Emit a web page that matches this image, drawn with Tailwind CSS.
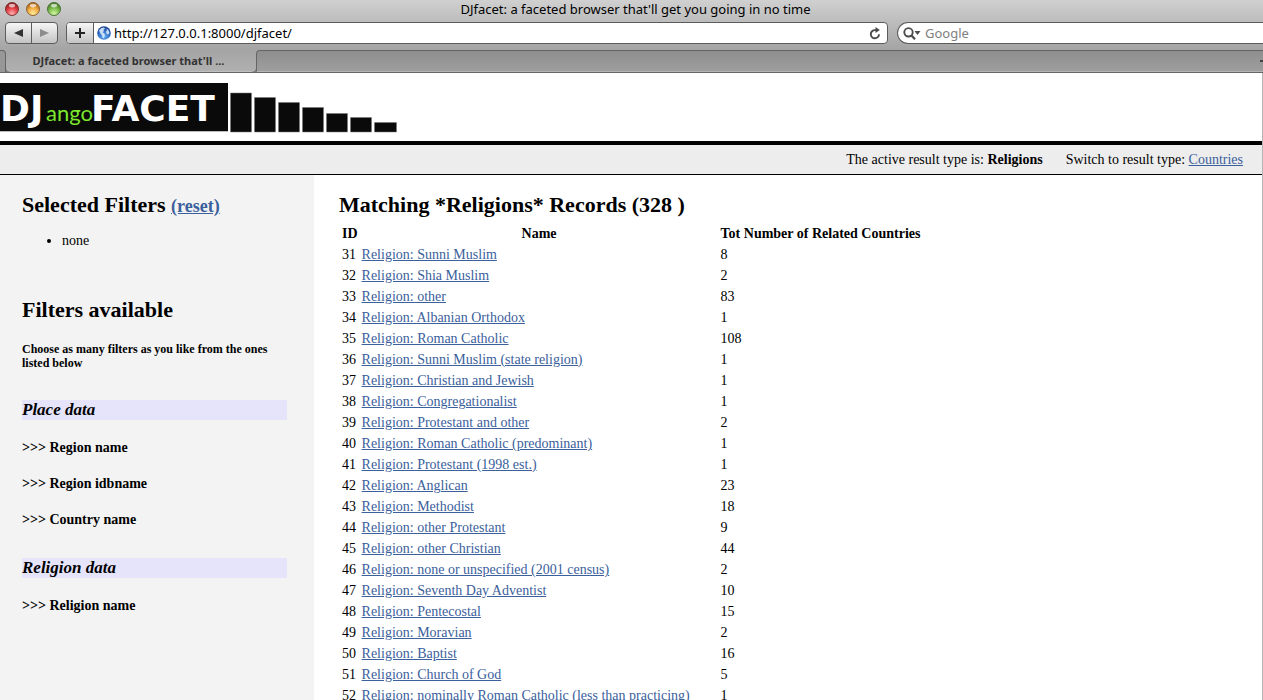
<!DOCTYPE html>
<html lang="en">
<head>
<meta charset="utf-8">
<title>DJfacet: a faceted browser that'll get you going in no time</title>
<script src="https://cdn.jsdelivr.net/npm/@tailwindcss/browser@4"></script>
</head>
<body class="flex h-screen flex-col overflow-hidden bg-white font-['Liberation_Serif',serif] text-[14px] leading-[17px] text-black">

<!-- Browser window chrome -->
<div class="shrink-0 font-['Noto_Sans',sans-serif]">
  <div class="h-[50px] bg-linear-to-b from-[#d0d0d0] to-[#a4a4a4]">
    <div class="relative flex h-[22px] items-start justify-center">
      <div class="absolute left-[5px] top-[2px] flex gap-[7px]">
        <button aria-label="Close" class="block size-[14px]"><svg viewBox="0 0 14 14" class="size-full"><defs><radialGradient id="r" cx=".5" cy=".85" r=".8"><stop offset="0" stop-color="#ffb3b3"/><stop offset=".5" stop-color="#e8474c"/><stop offset="1" stop-color="#8c1519"/></radialGradient></defs><circle cx="7" cy="7" r="6.5" fill="url(#r)" stroke="#7b3636"/><ellipse cx="7" cy="3.6" rx="3.2" ry="1.8" fill="#fff" opacity=".65"/></svg></button>
        <button aria-label="Minimize" class="block size-[14px]"><svg viewBox="0 0 14 14" class="size-full"><defs><radialGradient id="y" cx=".5" cy=".85" r=".8"><stop offset="0" stop-color="#ffec9c"/><stop offset=".5" stop-color="#f5b24a"/><stop offset="1" stop-color="#a85f14"/></radialGradient></defs><circle cx="7" cy="7" r="6.5" fill="url(#y)" stroke="#8d6231"/><ellipse cx="7" cy="3.6" rx="3.2" ry="1.8" fill="#fff" opacity=".65"/></svg></button>
        <button aria-label="Zoom" class="block size-[14px]"><svg viewBox="0 0 14 14" class="size-full"><defs><radialGradient id="g" cx=".5" cy=".85" r=".8"><stop offset="0" stop-color="#d6f7a6"/><stop offset=".5" stop-color="#83c153"/><stop offset="1" stop-color="#3d7420"/></radialGradient></defs><circle cx="7" cy="7" r="6.5" fill="url(#g)" stroke="#4d7338"/><ellipse cx="7" cy="3.6" rx="3.2" ry="1.8" fill="#fff" opacity=".65"/></svg></button>
      </div>
      <div class="pl-[8px] text-[13px] leading-[18px]">DJfacet: a faceted browser that'll get you going in no time</div>
    </div>
    <div class="flex h-[22px] pl-[5px]">
      <div class="mr-[8px] flex w-[53px] overflow-hidden rounded-[4px] border border-[#5c5c5c] bg-linear-to-b from-[#f6f6f6] to-[#c4c4c4]">
        <button aria-label="Back" class="flex w-[26px] items-center justify-center border-r border-[#5c5c5c]"><svg viewBox="0 0 9 8" class="h-[8px] w-[9px]"><path d="M0 4 9 0v8z" fill="#333"/></svg></button>
        <button aria-label="Forward" class="flex flex-1 items-center justify-center"><svg viewBox="0 0 9 8" class="h-[8px] w-[9px]"><path d="M9 4 0 0v8z" fill="#8c8c8c"/></svg></button>
      </div>
      <div class="mr-[9px] flex min-w-0 flex-1 overflow-hidden rounded-[4px] border border-[#5c5c5c] bg-white">
        <button aria-label="Add bookmark" class="flex w-[27px] shrink-0 items-center justify-center border-r border-[#5c5c5c] bg-linear-to-b from-[#f6f6f6] to-[#c4c4c4]"><svg viewBox="0 0 10 10" class="size-[10px]"><path d="M5 0v10M0 5h10" stroke="#222" stroke-width="2"/></svg></button>
        <svg viewBox="0 0 14 14" class="ml-[3px] mt-[3px] size-[14px] shrink-0"><defs><radialGradient id="e" cx=".5" cy=".75" r=".75"><stop offset="0" stop-color="#6fb4f5"/><stop offset=".6" stop-color="#2d68c0"/><stop offset="1" stop-color="#1c3f8c"/></radialGradient></defs><circle cx="7" cy="7" r="6.8" fill="url(#e)"/><path d="M2 4.500 4 2.300l3-.8 1 1.200-1.500 1L7 5 5.500 6.300l1.700 1.200.8 1.800-1.300 3-1.200-.5-.3-2.500L3.500 7.500zM9.500 2.500l2 1.700 1 2.800-1.500 1.500-1.500-1-.5-2 1-1z" fill="#e4f1fd" opacity=".85"/></svg>
        <input aria-label="Address" type="text" value="http://127.0.0.1:8000/djfacet/" class="min-w-0 flex-1 bg-transparent pl-[3px] text-[13px] leading-[18px] outline-none">
        <button aria-label="Reload" class="mr-[6px] flex w-[12px] items-center justify-center"><svg viewBox="0 0 12 13" class="h-[13px] w-[12px]"><path d="M10 7.200A4.100 4.100 0 1 1 6 3.100h2" fill="none" stroke="#4a4a4a" stroke-width="1.900"/><path d="M6.500 0 10.800 3.100 6.500 6z" fill="#4a4a4a"/></svg></button>
      </div>
      <div class="flex w-[366px] items-center rounded-l-full border border-r-0 border-[#5c5c5c] bg-white pl-[5px]">
        <svg viewBox="0 0 18 13" class="h-[13px] w-[18px] shrink-0"><circle cx="5.500" cy="5.300" r="4.200" fill="none" stroke="#4c4c4c" stroke-width="1.900"/><path d="M8.500 8.500 12 12.300" stroke="#4c4c4c" stroke-width="2.200"/><path d="M11.500 4h6l-3 4z" fill="#4c4c4c"/></svg>
        <input aria-label="Search Google" type="text" placeholder="Google" class="min-w-0 flex-1 bg-transparent pl-[4px] text-[13px] leading-[18px] outline-none placeholder:text-[#808080]">
      </div>
    </div>
  </div>
  <div class="flex h-[23px] border-b border-[#656565] bg-[#a9a9a9]">
    <div class="w-[6px] rounded-tr-[4px] border-r border-t border-[#656565] bg-[#979797]"></div>
    <div class="flex w-[250px] bg-[#808080]">
      <button class="flex-1 rounded-b-[5px] border-b border-[#c0c0c0] bg-linear-to-b from-[#a4a4a4] to-[#b0b0b0] pr-[5px] text-[11px] font-bold leading-[20px] text-[#333]">DJfacet: a faceted browser that'll ...</button>
    </div>
    <div class="flex flex-1 items-center justify-end rounded-tl-[4px] border-b border-l border-t border-b-[#b4b4b4] border-l-[#656565] border-t-[#656565] bg-linear-to-b from-[#8e8e8e] to-[#9e9e9e]"><span class="h-[2px] w-[3px] bg-[#444]"></span></div>
  </div>
</div>

<div class="flex min-h-0 flex-1 flex-col border-r border-[#b5b5b5]">
  <header class="h-[72px] shrink-0 border-b-4 border-black pt-[10px]">
    <svg viewBox="0 0 400 50" class="h-[50px] w-[400px]" role="img" aria-label="DJango FACET">
      <path d="M0 0h228v48H0z" fill="#0a0a0a"/><path d="M0 48.500h228" stroke="#bbb"/>
      <g fill="#0a0a0a" stroke="#777" stroke-width=".5"><path d="M230.500 10h21v39h-21zM254.500 14.500h21V49h-21zM278.500 19.500h21V49h-21zM302.500 24.500h21V49h-21zM326.500 30.500h21V49h-21zM350.500 34.500h21V49h-21zM374.500 39.500h22V49h-22z"/></g>
      <g fill="#fff"><text x="0" y="38" font-family="DejaVu Sans, sans-serif" font-size="36" font-weight="700">DJ</text><text x="46" y="38" font-family="Lato, sans-serif" font-size="22" fill="#7be82c">ango</text><text x="91" y="38" font-family="DejaVu Sans, sans-serif" font-size="36" font-weight="700">FACET</text></g>
    </svg>
  </header>
  <div class="flex h-[30px] shrink-0 items-center justify-end gap-[23px] border-b border-black bg-[#ededed] pr-[19px]">
    <span>The active result type is: <b>Religions</b></span>
    <span>Switch to result type: <a href="#" class="text-[#3b609c] underline">Countries</a></span>
  </div>

  <div class="flex min-h-0 flex-1">
    <aside class="w-[314px] shrink-0 bg-[#f3f3f3] pl-[22px] pr-[27px] pt-[17px]">
      <h2 class="text-[22px] font-bold leading-[26px]">Selected Filters <a href="#" class="text-[18px] text-[#3b609c] underline">(reset)</a></h2>
      <ul class="mt-[13px] list-disc pl-[40px]"><li>none</li></ul>
      <h2 class="mt-[48px] text-[22px] font-bold leading-[26px]">Filters available</h2>
      <p class="mt-[19px] text-[12px] font-bold leading-[14px]">Choose as many filters as you like from the ones listed below</p>
      <h3 class="mt-[30px] bg-[#e6e4fa] text-[17px] font-bold italic leading-[20px]">Place data</h3>
      <div class="mt-[19px] flex flex-col gap-[19px] font-bold">
        <p>&gt;&gt;&gt; Region name</p>
        <p>&gt;&gt;&gt; Region idbname</p>
        <p>&gt;&gt;&gt; Country name</p>
      </div>
      <h3 class="mt-[30px] bg-[#e6e4fa] text-[17px] font-bold italic leading-[20px]">Religion data</h3>
      <p class="mt-[19px] font-bold">&gt;&gt;&gt; Religion name</p>
    </aside>

    <main class="min-w-0 flex-1 overflow-hidden pl-[25px] pt-[17px]">
      <h2 class="text-[22px] font-bold leading-[26px]">Matching *Religions* Records (328 )</h2>
      <table class="mt-[4px] border-separate border-spacing-[2px] [&_a]:text-[#3b609c] [&_a]:underline [&_td]:p-px [&_th]:p-px">
        <thead><tr><th class="w-[16px]">ID</th><th class="w-[357px]">Name</th><th>Tot Number of Related Countries</th></tr></thead>
        <tbody>
          <tr><td>31</td><td><a href="#">Religion: Sunni Muslim</a></td><td>8</td></tr>
          <tr><td>32</td><td><a href="#">Religion: Shia Muslim</a></td><td>2</td></tr>
          <tr><td>33</td><td><a href="#">Religion: other</a></td><td>83</td></tr>
          <tr><td>34</td><td><a href="#">Religion: Albanian Orthodox</a></td><td>1</td></tr>
          <tr><td>35</td><td><a href="#">Religion: Roman Catholic</a></td><td>108</td></tr>
          <tr><td>36</td><td><a href="#">Religion: Sunni Muslim (state religion)</a></td><td>1</td></tr>
          <tr><td>37</td><td><a href="#">Religion: Christian and Jewish</a></td><td>1</td></tr>
          <tr><td>38</td><td><a href="#">Religion: Congregationalist</a></td><td>1</td></tr>
          <tr><td>39</td><td><a href="#">Religion: Protestant and other</a></td><td>2</td></tr>
          <tr><td>40</td><td><a href="#">Religion: Roman Catholic (predominant)</a></td><td>1</td></tr>
          <tr><td>41</td><td><a href="#">Religion: Protestant (1998 est.)</a></td><td>1</td></tr>
          <tr><td>42</td><td><a href="#">Religion: Anglican</a></td><td>23</td></tr>
          <tr><td>43</td><td><a href="#">Religion: Methodist</a></td><td>18</td></tr>
          <tr><td>44</td><td><a href="#">Religion: other Protestant</a></td><td>9</td></tr>
          <tr><td>45</td><td><a href="#">Religion: other Christian</a></td><td>44</td></tr>
          <tr><td>46</td><td><a href="#">Religion: none or unspecified (2001 census)</a></td><td>2</td></tr>
          <tr><td>47</td><td><a href="#">Religion: Seventh Day Adventist</a></td><td>10</td></tr>
          <tr><td>48</td><td><a href="#">Religion: Pentecostal</a></td><td>15</td></tr>
          <tr><td>49</td><td><a href="#">Religion: Moravian</a></td><td>2</td></tr>
          <tr><td>50</td><td><a href="#">Religion: Baptist</a></td><td>16</td></tr>
          <tr><td>51</td><td><a href="#">Religion: Church of God</a></td><td>5</td></tr>
          <tr><td>52</td><td><a href="#">Religion: nominally Roman Catholic (less than practicing)</a></td><td>1</td></tr>
        </tbody>
      </table>
    </main>
  </div>
</div>
</body>
</html>
